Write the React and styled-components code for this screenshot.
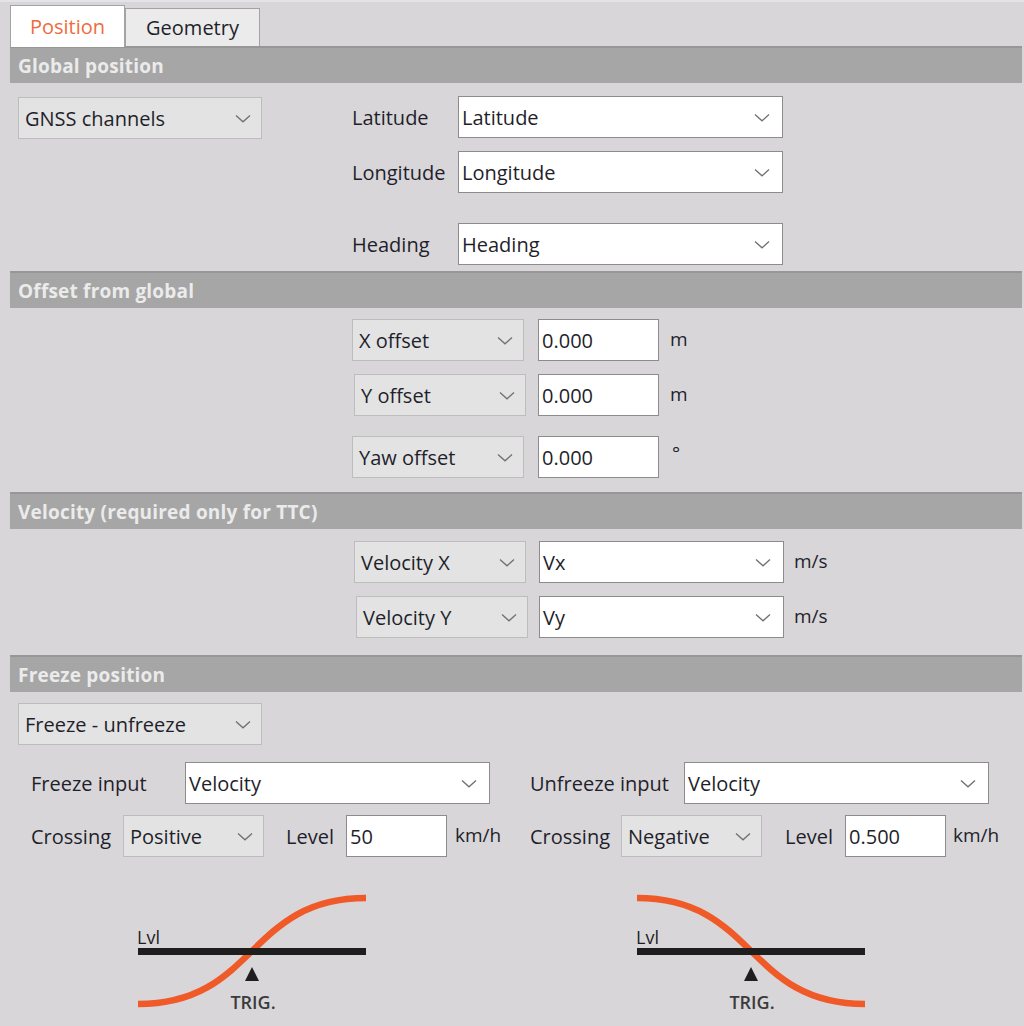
import React from "react";
import styled, { createGlobalStyle } from "styled-components";

const Global = createGlobalStyle`
  html, body { margin: 0; padding: 0; background: #d8d6d9; }
  body { font-family: "Open Sans", "Noto Sans", sans-serif; color: #1f1f2b; }
`;

const Page = styled.div`
  width: 1024px;
  height: 1026px;
  box-sizing: border-box;
  padding: 6px 2px 0 10px;
  border-top: 2px solid #e4e3e5;
  overflow: hidden;
`;

const TabBar = styled.div`
  display: flex;
  align-items: flex-end;
  height: 40px;
  margin-top: -2px;
`;

const Tab = styled.div`
  box-sizing: border-box;
  height: ${(p) => (p.$active ? "42px" : "38px")};
  width: ${(p) => p.$w}px;
  display: flex;
  align-items: center;
  justify-content: center;
  background: ${(p) => (p.$active ? "#ffffff" : "#ebebeb")};
  border: 1px solid #a3a3a3;
  border-bottom: none;
  margin-bottom: ${(p) => (p.$active ? "-1px" : "0")};
  color: ${(p) => (p.$active ? "#f06b3e" : "#1f1f2b")};
  font-size: 20px;
  position: relative;
  z-index: ${(p) => (p.$active ? 2 : 1)};
`;

const SectionHeader = styled.div`
  height: 37px;
  box-sizing: border-box;
  background: #a6a6a6;
  border-top: 2px solid #979797;
  color: #ebebeb;
  font-weight: 700;
  font-size: 19px;
  letter-spacing: 0.2px;
  display: flex;
  align-items: center;
  padding-left: 8px;
`;

const Dropdown = styled.div`
  box-sizing: border-box;
  width: ${(p) => p.$w}px;
  height: 42px;
  background: ${(p) => (p.$white ? "#ffffff" : "#e3e3e3")};
  border: 1px solid ${(p) => (p.$white ? "#8c8c8c" : "#bdbdbd")};
  display: flex;
  align-items: center;
  justify-content: space-between;
  padding: 0 ${(p) => (p.$white ? 12 : 10)}px 0 ${(p) => (p.$white ? 3 : 6)}px;
  font-size: 20px;
  color: #1f1f2b;
  flex-shrink: 0;
  margin-left: ${(p) => p.$ml || 0}px;
`;

const TextInput = styled.div`
  box-sizing: border-box;
  width: ${(p) => p.$w}px;
  height: 42px;
  background: #ffffff;
  border: 1px solid #8c8c8c;
  display: flex;
  align-items: center;
  padding-left: 3px;
  font-size: 20px;
  flex-shrink: 0;
  margin-left: ${(p) => p.$ml || 0}px;
`;

const Label = styled.div`
  font-size: 20px;
  color: #1f1f2b;
  width: ${(p) => (p.$w ? `${p.$w}px` : "auto")};
  flex-shrink: 0;
  margin-left: ${(p) => p.$ml || 0}px;
  white-space: nowrap;
`;

const Unit = styled.div`
  font-size: 19px;
  color: #1f1f2b;
  margin-left: ${(p) => p.$ml}px;
  align-self: ${(p) => (p.$top ? "flex-start" : "center")};
  margin-top: ${(p) => (p.$top ? "4px" : "-2px")};
`;

const Chevron = () => (
  <svg width="16" height="9" viewBox="0 0 16 9">
    <path d="M1 1.5 L8 7.8 L15 1.5" fill="none" stroke="#707070" strokeWidth="1.3" />
  </svg>
);

const Select = ({ children, ...rest }) => (
  <Dropdown {...rest}>
    <span>{children}</span>
    <Chevron />
  </Dropdown>
);

const GlobalBody = styled.div`
  display: flex;
  align-items: flex-start;
  padding: 14px 0 6px 8px;
`;

const FieldGrid = styled.div`
  display: grid;
  grid-template-columns: 106px 325px;
  grid-template-rows: 42px 42px 4px 42px;
  row-gap: 13px;
  align-items: center;
  margin-left: 90px;
  margin-top: -1px;
`;

const Spacer = styled.div`
  grid-column: 1 / 3;
`;

const RowStack = styled.div`
  display: flex;
  flex-direction: column;
  gap: ${(p) => p.$gap}px;
  padding: ${(p) => p.$pad};
`;

const Row = styled.div`
  display: flex;
  align-items: center;
  margin-left: ${(p) => p.$ml || 0}px;
  margin-top: ${(p) => p.$mt || 0}px;
`;

const FreezeBody = styled.div`
  padding: 11px 0 0 8px;
`;

const Columns = styled.div`
  display: grid;
  grid-template-columns: 499px 492px;
  margin-top: 17px;
  margin-left: 13px;
`;

const Column = styled.div`
  display: flex;
  flex-direction: column;
  gap: 11px;
`;

const DiagramWrap = styled.div`
  margin: 24px 0 0 106px;
`;

const Diagram = ({ rising }) => (
  <DiagramWrap>
    <svg width="232" height="124" viewBox="0 0 232 124">
      <path
        d={rising ? "M1 112 C120 112 110 6 229 6" : "M1 6 C120 6 110 112 229 112"}
        fill="none"
        stroke="#f05a28"
        strokeWidth="6.5"
      />
      <rect x="1" y="56" width="228" height="7" fill="#1e1e1e" />
      <text x="0" y="52" fontSize="18" fontFamily="Open Sans, sans-serif" fill="#1e1e1e">Lvl</text>
      <path d="M115 75 L122 89 L108 89 Z" fill="#1e1e1e" />
      <text x="116" y="117" fontSize="18" textAnchor="middle" fontWeight="600" fontFamily="Open Sans, sans-serif" fill="#3b3b3b">TRIG.</text>
    </svg>
  </DiagramWrap>
);

export default function App() {
  return (
    <>
      <Global />
      <Page>
        <TabBar>
          <Tab $active $w={115}>Position</Tab>
          <Tab $w={135}>Geometry</Tab>
        </TabBar>

        <SectionHeader>Global position</SectionHeader>
        <GlobalBody>
          <Select $w={244}>GNSS channels</Select>
          <FieldGrid>
            <Label>Latitude</Label>
            <Select $white $w={325}>Latitude</Select>
            <Label>Longitude</Label>
            <Select $white $w={325}>Longitude</Select>
            <Spacer />
            <Label>Heading</Label>
            <Select $white $w={325}>Heading</Select>
          </FieldGrid>
        </GlobalBody>

        <SectionHeader>Offset from global</SectionHeader>
        <RowStack $gap={13} $pad="11px 0 14px 342px">
          <Row>
            <Select $w={172}>X offset</Select>
            <TextInput $w={121} $ml={14}>0.000</TextInput>
            <Unit $ml={11}>m</Unit>
          </Row>
          <Row>
            <Select $w={172} $ml={2}>Y offset</Select>
            <TextInput $w={121} $ml={12}>0.000</TextInput>
            <Unit $ml={11}>m</Unit>
          </Row>
          <Row $mt={7}>
            <Select $w={172}>Yaw offset</Select>
            <TextInput $w={121} $ml={14}>0.000</TextInput>
            <Unit $ml={13} $top>°</Unit>
          </Row>
        </RowStack>

        <SectionHeader>Velocity (required only for TTC)</SectionHeader>
        <RowStack $gap={13} $pad="12px 0 17px 344px">
          <Row>
            <Select $w={172}>Velocity X</Select>
            <Select $white $w={245} $ml={13}>Vx</Select>
            <Unit $ml={10}>m/s</Unit>
          </Row>
          <Row $ml={2}>
            <Select $w={172}>Velocity Y</Select>
            <Select $white $w={245} $ml={11}>Vy</Select>
            <Unit $ml={10}>m/s</Unit>
          </Row>
        </RowStack>

        <SectionHeader>Freeze position</SectionHeader>
        <FreezeBody>
          <Select $w={244}>Freeze - unfreeze</Select>
          <Columns>
            <Column>
              <Row>
                <Label $w={154}>Freeze input</Label>
                <Select $white $w={305}>Velocity</Select>
              </Row>
              <Row>
                <Label $w={92}>Crossing</Label>
                <Select $w={141}>Positive</Select>
                <Label $w={60} $ml={22}>Level</Label>
                <TextInput $w={101}>50</TextInput>
                <Unit $ml={8}>km/h</Unit>
              </Row>
              <Diagram rising />
            </Column>
            <Column>
              <Row>
                <Label $w={154}>Unfreeze input</Label>
                <Select $white $w={305}>Velocity</Select>
              </Row>
              <Row>
                <Label $w={91}>Crossing</Label>
                <Select $w={141}>Negative</Select>
                <Label $w={60} $ml={23}>Level</Label>
                <TextInput $w={101}>0.500</TextInput>
                <Unit $ml={7}>km/h</Unit>
              </Row>
              <Diagram />
            </Column>
          </Columns>
        </FreezeBody>
      </Page>
    </>
  );
}
